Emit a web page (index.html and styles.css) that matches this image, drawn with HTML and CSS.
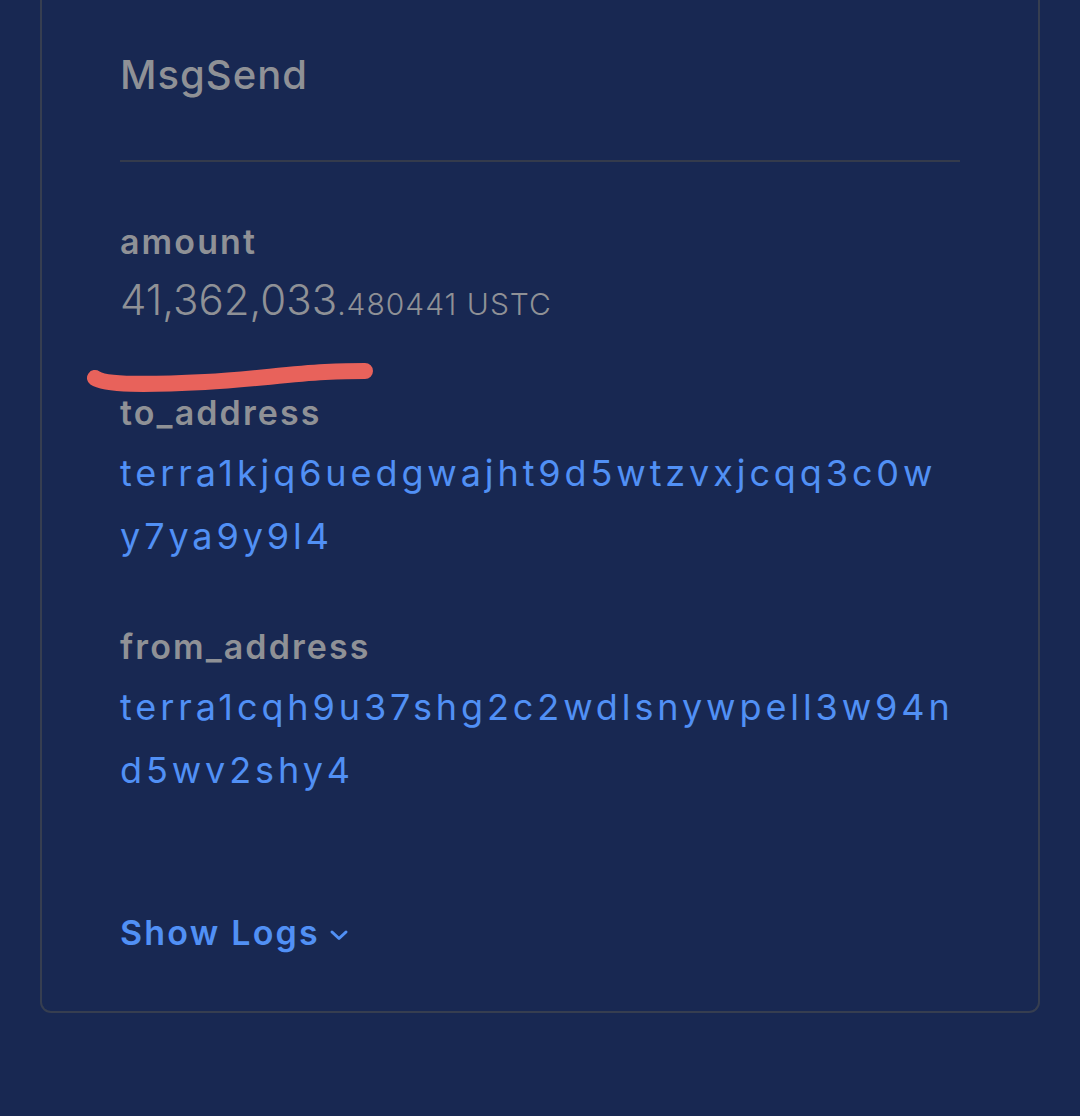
FILE: index.html
```html
<!DOCTYPE html>
<html lang="en">
<head>
<meta charset="utf-8">
<title>MsgSend</title>
<link rel="stylesheet" href="styles.css">
</head>
<body>
<div class="page">
  <section class="card">
    <h2 class="msg-title">MsgSend</h2>
    <div class="divider"></div>
    <dl class="fields">
      <div class="field">
        <dt class="label">amount</dt>
        <dd class="value amount"><span class="int">41,362,033</span><span class="dec">.480441 USTC</span></dd>
      </div>
      <div class="field">
        <dt class="label">to_address</dt>
        <dd class="value link"><span class="line">terra1kjq6uedgwajht9d5wtzvxjcqq3c0w</span><span class="line">y7ya9y9l4</span></dd>
      </div>
      <div class="field">
        <dt class="label">from_address</dt>
        <dd class="value link"><span class="line">terra1cqh9u37shg2c2wdlsnywpell3w94n</span><span class="line">d5wv2shy4</span></dd>
      </div>
    </dl>
    <button class="show-logs" type="button">Show Logs
      <svg class="chev" width="22" height="16" viewBox="0 0 22 16" fill="none"><path d="M4 5 L11 11.5 L18 5" stroke="currentColor" stroke-width="3" stroke-linecap="round" stroke-linejoin="round"/></svg>
    </button>
  </section>
  <svg class="scribble" width="300" height="40" viewBox="0 0 300 40" fill="none"><path d="M10 18 C 20 25, 60 25, 120 22 C 165 20, 200 14, 240 12 C 262 11, 275 11, 280 11" stroke="#e8625b" stroke-width="16" stroke-linecap="round"/></svg>
</div>
</body>
</html>
```

FILE: styles.css
```css
html, body {
  margin: 0;
  padding: 0;
  background: #182852;
}
body {
  font-family: Inter, "DejaVu Sans", sans-serif;
  width: 1080px;
  height: 1116px;
  overflow: hidden;
}
.page {
  position: relative;
  padding: 0 40px;
}
.card {
  border: 2px solid #363e50;
  border-top: none;
  border-radius: 0 0 11px 11px;
  padding: 50px 78px 58px;
  display: flex;
  flex-direction: column;
  align-items: flex-start;
}
.msg-title {
  margin: 0;
  font-size: 40px;
  line-height: 50px;
  font-weight: 500;
  letter-spacing: 1px;
  color: #8f9196;
}
.divider {
  align-self: stretch;
  height: 2px;
  background: #343b4c;
  margin-top: 60px;
}
.fields {
  margin: 60px 0 0;
  display: flex;
  flex-direction: column;
  gap: 59px;
}
.field {
  display: flex;
  flex-direction: column;
}
.label {
  font-size: 34px;
  line-height: 40px;
  font-weight: 600;
  letter-spacing: 2.1px;
  color: #8f9196;
}
.value {
  margin: 0;
  display: flex;
  flex-direction: column;
}
.amount {
  display: block;
  margin-top: 13px;
  color: #8f9196;
  line-height: 50px;
}
.amount .int {
  font-size: 42px;
  font-weight: 300;
}
.amount .dec {
  font-size: 30px;
  font-weight: 300;
  letter-spacing: 1px;
}
.link {
  color: #5190f5;
  font-size: 36px;
  line-height: 63px;
  font-weight: 400;
  letter-spacing: 3.9px;
  margin-top: 9px;
}
.show-logs {
  margin-top: 110px;
  padding: 0;
  border: none;
  background: none;
  color: #5190f5;
  font-family: inherit;
  font-size: 34px;
  font-weight: 600;
  letter-spacing: 2.2px;
  display: flex;
  align-items: center;
  gap: 8px;
  cursor: pointer;
}
.chev {
  margin-top: 4px;
}
.scribble {
  position: absolute;
  left: 85px;
  top: 360px;
}
```
